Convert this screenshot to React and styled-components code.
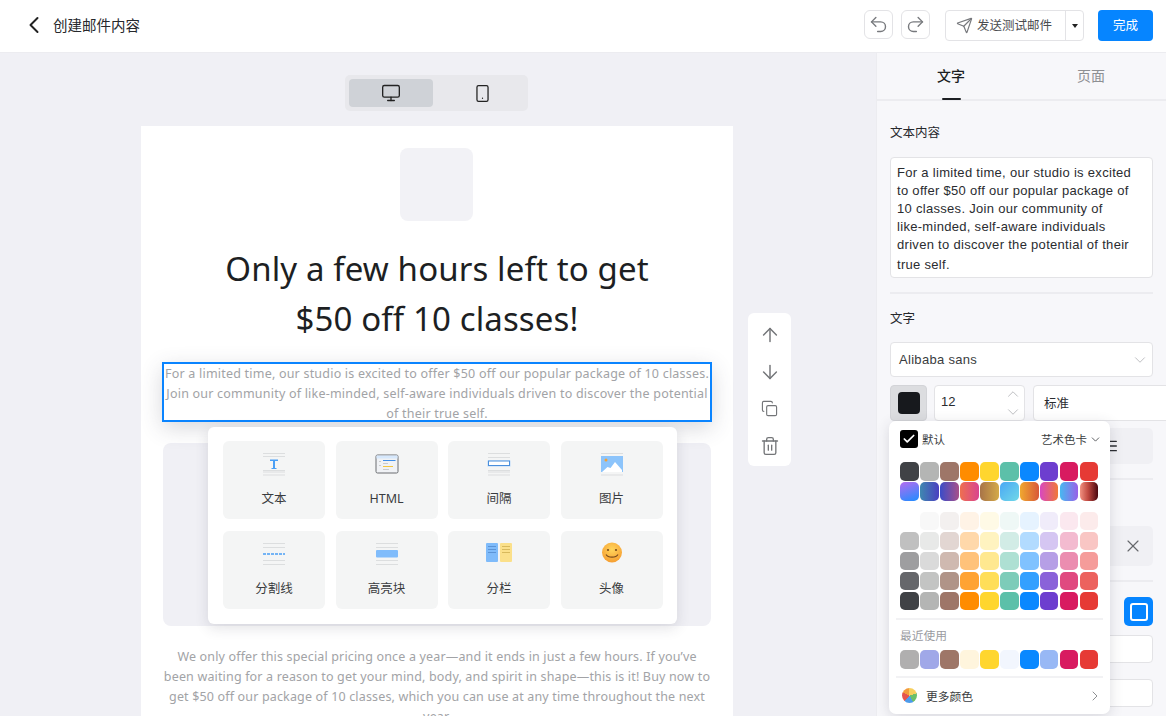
import React from "react";
import styled, { createGlobalStyle } from "styled-components";
import {
  ArrowDown,
  ArrowUp,
  Check,
  ChevronDown,
  ChevronLeft,
  ChevronRight,
  ChevronUp,
  Copy,
  Menu,
  Monitor,
  Redo2,
  Send,
  Smartphone,
  Trash2,
  Undo2,
  X,
} from "lucide-react";

const GlobalStyle = createGlobalStyle`
  html, body {
    margin: 0;
    padding: 0;
    height: 100%;
    overflow: hidden;
    font-family: "Noto Sans", "Noto Sans CJK SC", sans-serif;
    color: #1b1d21;
  }
  * { box-sizing: border-box; }
`;

const Page = styled.div`
  width: 1166px;
  height: 716px;
  overflow: hidden;
  display: flex;
  flex-direction: column;
  background: #fff;
`;

// top bar
const Header = styled.header`
  flex: none;
  height: 53px;
  padding: 10px 13px 0 20px;
  display: flex;
  align-items: flex-start;
  border-bottom: 1px solid #ececf0;
  background: #fff;
`;

const BackTitle = styled.div`
  display: flex;
  align-items: center;
  gap: 5px;
  height: 29px;
  font-size: 14.5px;
  color: #26282c;
  margin-right: auto;
`;

const IconButton = styled.button`
  width: 29px;
  height: 29px;
  padding: 0;
  margin-right: ${(p) => p.$mr || 0}px;
  display: flex;
  align-items: center;
  justify-content: center;
  background: #fff;
  border: 1px solid #e3e3e6;
  border-radius: 6px;
  color: #77797d;
`;

const SendGroup = styled.div`
  width: 139px;
  height: 31px;
  margin-right: 14px;
  display: flex;
  background: #fff;
  border: 1px solid #e3e3e6;
  border-radius: 4px;
`;

const SendMain = styled.div`
  flex: 1;
  display: flex;
  align-items: center;
  gap: 4px;
  padding-left: 10px;
  font-size: 12.5px;
  color: #4a4c50;
  border-right: 1px solid #e3e3e6;
`;

const SendLabel = styled.span`
  margin-top: -3px;
`;

const Caret = styled.div`
  width: 17px;
  display: flex;
  align-items: center;
  justify-content: center;
  &::after {
    content: "";
    border-top: 4px solid #222;
    border-left: 3.5px solid transparent;
    border-right: 3.5px solid transparent;
  }
`;

const DoneButton = styled.button`
  width: 55px;
  height: 31px;
  padding: 0 0 3px;
  background: #0685ff;
  border: none;
  border-radius: 4px;
  color: #fff;
  font: inherit;
  font-size: 12.5px;
`;

const Body = styled.div`
  flex: 1;
  min-height: 0;
  display: flex;
`;

// editing area
const Main = styled.main`
  width: 876px;
  padding: 22px 2px 0 0;
  display: flex;
  flex-direction: column;
  align-items: center;
  background: #f0f0f5;
`;

const DeviceToggle = styled.div`
  flex: none;
  width: 183px;
  height: 36px;
  margin-left: -1px;
  padding: 4px 0 4px 4px;
  display: flex;
  background: #e8e8ec;
  border-radius: 5px;
`;

const DeviceOption = styled.div`
  flex: none;
  width: ${(p) => (p.$active ? 84 : 95)}px;
  padding-left: ${(p) => (p.$active ? 0 : 3)}px;
  display: flex;
  align-items: center;
  justify-content: center;
  background: ${(p) => (p.$active ? "#cfd2d7" : "transparent")};
  border-radius: 4px;
  color: #222;
`;

const Canvas = styled.div`
  flex: none;
  position: relative;
  width: 592px;
  margin-top: 15px;
  padding: 22px 22px 0;
  display: flex;
  flex-direction: column;
  align-items: stretch;
  background: #fff;
`;

const LogoBox = styled.div`
  width: 73px;
  height: 73px;
  align-self: center;
  margin-left: -1px;
  background: #f2f2f6;
  border-radius: 8px;
`;

const Heading = styled.h1`
  margin: 23px 0 18px;
  font-size: 33px;
  font-weight: 400;
  line-height: 50px;
  letter-spacing: 0.12px;
  text-align: center;
  color: #1d1f23;
`;

const Selected = styled.div`
  position: relative;
  margin: 0 -1px;
  height: 60px;
  padding: 0;
  border: 2px solid #0a84ff;
  box-shadow: 0 6px 22px rgba(60, 60, 80, 0.2);
  font-size: 12.5px;
  line-height: 20px;
  letter-spacing: 0.21px;
  text-align: center;
  color: #a2a3a6;
  white-space: nowrap;
  background: #fff;
`;

const BlockPicker = styled.div`
  position: absolute;
  top: calc(100% + 7px);
  left: 44px;
  z-index: 3;
  width: 469px;
  height: 197px;
  padding: 14px 15px;
  display: grid;
  grid-template-columns: repeat(4, 102px);
  grid-auto-rows: 78px;
  column-gap: 10.5px;
  row-gap: 12px;
  background: #fff;
  border-radius: 6px;
  box-shadow: 0 4px 14px rgba(50, 50, 70, 0.14);
  letter-spacing: 0;
`;

const BlockCard = styled.div`
  padding-top: 11px;
  display: flex;
  flex-direction: column;
  align-items: center;
  background: #f4f5f5;
  border-radius: 6px;
  font-size: 12.5px;
  color: #3a3c40;
`;

const BlockLabel = styled.span`
  margin-top: 13px;
  line-height: 20px;
`;

const ImageHolder = styled.div`
  height: 183px;
  margin-top: 21px;
  background: #f0f0f5;
  border-radius: 8px;
`;

const Paragraph = styled.p`
  margin: 21px 0 0;
  font-size: 12.5px;
  line-height: 20px;
  letter-spacing: 0.16px;
  text-align: center;
  color: #a2a3a6;
  white-space: nowrap;
`;

const FloatTools = styled.div`
  position: absolute;
  left: 607px;
  top: 187px;
  width: 43px;
  height: 153px;
  padding-top: 3px;
  display: grid;
  grid-auto-rows: 37px;
  justify-items: center;
  align-items: center;
  background: #fff;
  border-radius: 6px;
  color: #737578;
`;

// right side panel
const Side = styled.aside`
  position: relative;
  width: 290px;
  overflow: hidden;
  background: #f7f7fa;
  border-left: 1px solid #ececf0;
`;

const Tabs = styled.div`
  height: 48px;
  padding: 0 5px 2px 4px;
  display: flex;
  border-bottom: 2px solid #ececf0;
`;

const Tab = styled.div`
  position: relative;
  flex: 1;
  display: flex;
  align-items: center;
  justify-content: center;
  font-size: 14px;
  font-weight: ${(p) => (p.$active ? 500 : 400)};
  color: ${(p) => (p.$active ? "#1d1f23" : "#8d8f93")};
  ${(p) =>
    p.$active &&
    `&::after {
      content: "";
      position: absolute;
      left: 61px;
      bottom: -3px;
      width: 19px;
      height: 2px;
      background: #1d1f23;
      border-radius: 1px;
    }`}
`;

const Section = styled.section`
  margin: 0 13px;
  padding: ${(p) => p.$pad || "15px 0"};
  border-bottom: ${(p) => (p.$last ? "none" : "2px solid #ececf0")};
`;

const Label = styled.div`
  font-size: 12.5px;
  line-height: 18px;
  color: #26282c;
`;

const TextBox = styled.div`
  margin-top: 15px;
  height: 121px;
  padding: 6px 6px;
  background: #fff;
  border: 1px solid #e3e3e6;
  border-radius: 4px;
  font-family: "Liberation Sans", "Noto Sans CJK SC", sans-serif;
  font-size: 13px;
  line-height: 18px;
  letter-spacing: 0.3px;
  color: #2a2c30;
  white-space: nowrap;
`;

const LastLine = styled.span`
  display: block;
  margin-top: 2px;
`;

const SelectBox = styled.div`
  margin-top: 14px;
  height: 35px;
  padding: 0 3px 0 8px;
  display: flex;
  align-items: center;
  justify-content: space-between;
  background: #fff;
  border: 1px solid #e3e3e6;
  border-radius: 4px;
  font-family: "Liberation Sans", "Noto Sans CJK SC", sans-serif;
  font-size: 13px;
  letter-spacing: 0.3px;
  color: #3a3c40;
`;

const FontRow = styled.div`
  margin-top: 8px;
  display: flex;
  gap: 8px;
`;

const ColorButton = styled.div`
  flex: none;
  width: 37px;
  height: 36px;
  margin-right: -1px;
  display: flex;
  align-items: center;
  justify-content: center;
  background: #dcdde0;
  border: 1px solid #d3d4d8;
  border-radius: 4px;
  &::after {
    content: "";
    width: 22px;
    height: 22px;
    border-radius: 4px;
    background: #17191d;
  }
`;

const NumberBox = styled.div`
  flex: none;
  position: relative;
  width: 91px;
  height: 36px;
  padding: 0 0 3px 6px;
  display: flex;
  align-items: center;
  background: #fff;
  border: 1px solid #e3e3e6;
  border-radius: 4px;
  font-family: "Liberation Sans", "Noto Sans CJK SC", sans-serif;
  font-size: 13px;
  color: #2a2c30;
`;

const Stepper = styled.div`
  position: absolute;
  right: 2px;
  top: -1px;
  bottom: -1px;
  display: flex;
  flex-direction: column;
  justify-content: space-between;
  color: #a8a9ad;
`;

const WeightBox = styled.div`
  flex: none;
  width: 150px;
  height: 36px;
  padding: 0 0 2px 10px;
  display: flex;
  align-items: center;
  background: #fff;
  border: 1px solid #e3e3e6;
  border-radius: 4px;
  font-size: 12.5px;
  color: #2a2c30;
`;

const AlignRow = styled.div`
  margin-top: 7px;
  height: 36px;
  padding-right: 34px;
  display: flex;
  align-items: center;
  justify-content: flex-end;
  background: #f0f0f4;
  border-radius: 5px;
  color: #2a2c30;
`;

const ClearRow = styled.div`
  margin-top: 46px;
  height: 40px;
  padding-right: 10px;
  display: flex;
  align-items: center;
  justify-content: flex-end;
  background: #f0f0f4;
  border-radius: 5px;
  color: #66686c;
`;

const ModeButton = styled.div`
  width: 29px;
  height: 29px;
  margin-left: auto;
  display: flex;
  align-items: center;
  justify-content: center;
  background: #0685ff;
  border-radius: 5px;
  &::after {
    content: "";
    width: 14px;
    height: 14px;
    border: 2px solid #fff;
    border-radius: 3px;
  }
`;

const PlainInput = styled.div`
  height: 28px;
  margin-top: ${(p) => p.$mt}px;
  background: #fff;
  border: 1px solid #e3e3e6;
  border-radius: 4px;
`;

// colour popover
const ColorPopover = styled.div`
  position: absolute;
  left: 12px;
  top: 368px;
  z-index: 4;
  width: 221px;
  height: 293px;
  padding: 0 7px;
  display: flex;
  flex-direction: column;
  background: #fff;
  border-radius: 7px;
  box-shadow: 0 3px 14px rgba(50, 50, 70, 0.16);
`;

const PopoverHead = styled.div`
  height: 36px;
  padding: 0 1px 0 4px;
  display: flex;
  align-items: center;
  justify-content: space-between;
  font-size: 11.5px;
  color: #3a3c40;
`;

const DefaultCheck = styled.div`
  display: flex;
  align-items: center;
  gap: 4px;
`;

const CheckMark = styled.span`
  width: 18px;
  height: 18px;
  display: flex;
  align-items: center;
  justify-content: center;
  background: #000;
  border-radius: 3px;
  color: #fff;
`;

const PaletteName = styled.div`
  display: flex;
  align-items: center;
  gap: 2px;
`;

const SwatchGrid = styled.div`
  margin: ${(p) => p.$mt || 0}px 0 0 4px;
  display: grid;
  grid-template-columns: repeat(10, 18.6px);
  grid-auto-rows: 18.6px;
  gap: 1.4px;
`;

const Swatch = styled.span`
  border-radius: 5px;
  background: ${(p) => p.$bg};
`;

const Rule = styled.div`
  height: 2px;
  margin-top: ${(p) => p.$mt}px;
  background: #f2f2f4;
`;

const RecentLabel = styled.div`
  margin: 7px 0 7px 4px;
  font-size: 11.75px;
  line-height: 16px;
  color: #9a9b9f;
`;

const MoreRow = styled.div`
  flex: 1;
  padding: 0 0 0 6px;
  display: flex;
  align-items: center;
  gap: 9px;
  font-size: 11.75px;
  color: #3a3c40;
`;

const MoreText = styled.span`
  margin-right: auto;
`;

const Wheel = styled.span`
  width: 15px;
  height: 15px;
  border-radius: 50%;
  background: conic-gradient(#f7cf5e 0 20%, #6cbf6a 20% 42%, #4d9bea 42% 62%, #e5544e 62% 82%, #f39a3c 82% 100%);
`;

const Bars = ({ rows, w = 22, y = 0 }) =>
  rows.map((r, i) => <rect key={i} x={(24 - w) / 2} y={r + y} width={w} height="1" fill="#dcdedf" />);

const TextIcon = () => (
  <svg width="24" height="24" viewBox="0 0 24 24">
    <Bars rows={[1, 4, 18, 19.5, 22.5]} />
    <rect x="1" y="5" width="22" height="12.5" fill="#f4f5f5" />
    <path d="M8 7.5h8v1.6h-3v7h1.5v1h-5v-1H11v-7H8z" fill="#4a9ff5" />
  </svg>
);

const HtmlIcon = () => (
  <svg width="24" height="24" viewBox="0 0 24 24">
    <rect x="1" y="3" width="22" height="18" rx="1.5" fill="#f0f2f5" stroke="#6a6c70" />
    <rect x="1.5" y="3.5" width="21" height="3" fill="#d6e8fc" />
    <rect x="8" y="8" width="12.5" height="1" fill="#3d8de8" />
    <rect x="8" y="11" width="5" height="1" fill="#c8cacc" />
    <rect x="8" y="14" width="10" height="1" fill="#f4c63f" />
    <rect x="8" y="17" width="6" height="1" fill="#c8cacc" />
    <rect x="4" y="9" width="2" height="1" fill="#c8cacc" />
    <rect x="4" y="13" width="2" height="1" fill="#c8cacc" />
  </svg>
);

const SpacerIcon = () => (
  <svg width="24" height="24" viewBox="0 0 24 24">
    <Bars rows={[1, 5, 18, 19.5, 22.5]} />
    <rect x="0.5" y="8.5" width="23" height="6" fill="#b9dafc" />
    <rect x="1.5" y="9" width="21" height="4.5" fill="#fff" stroke="#4a8fdc" />
  </svg>
);

const ImageIcon = () => (
  <svg width="24" height="24" viewBox="0 0 24 24">
    <rect x="1" y="1" width="22" height="1" fill="#dcdedf" />
    <rect x="1" y="22.5" width="22" height="1" fill="#dcdedf" />
    <rect x="1" y="4" width="22" height="16" fill="#8cc4fb" />
    <circle cx="6" cy="8" r="1.5" fill="#f3a034" />
    <path d="M2 20l5.5-5 3 1 4.5-6 7 8v2z" fill="#fff" />
  </svg>
);

const DividerIcon = () => (
  <svg width="24" height="24" viewBox="0 0 24 24">
    <Bars rows={[1, 5, 18, 22]} />
    <path d="M1 12h22" stroke="#4a9ff5" strokeWidth="1.4" strokeDasharray="3 1" />
  </svg>
);

const HighlightIcon = () => (
  <svg width="24" height="24" viewBox="0 0 24 24">
    <Bars rows={[1, 5, 18, 22]} />
    <rect x="1" y="8" width="22" height="7.5" rx="1" fill="#80bcfb" />
  </svg>
);

const ColumnsIcon = () => (
  <svg width="28" height="24" viewBox="0 0 28 24">
    <rect x="1" y="1" width="12" height="19" rx="1" fill="#7fbbfa" />
    <rect x="15" y="1" width="12" height="19" rx="1" fill="#fbe08a" />
    {[4, 7, 10].map((y) => (
      <React.Fragment key={y}>
        <rect x="3" y={y} width="8" height="1" fill="#5c94d6" />
        <rect x="17" y={y} width="8" height="1" fill="#d8b95c" />
      </React.Fragment>
    ))}
  </svg>
);

const AvatarIcon = () => (
  <svg width="24" height="24" viewBox="0 0 24 24">
    <defs>
      <radialGradient id="faceFill" cx="50%" cy="35%" r="70%">
        <stop offset="0%" stopColor="#ffd55c" />
        <stop offset="100%" stopColor="#f59a2e" />
      </radialGradient>
    </defs>
    <circle cx="12" cy="10.5" r="10" fill="url(#faceFill)" />
    <circle cx="8" cy="8" r="1.1" fill="#7a4a1c" />
    <circle cx="16" cy="8" r="1.1" fill="#7a4a1c" />
    <path d="M6 12.5c2 3.5 10 3.5 12 0" fill="none" stroke="#7a4a1c" strokeWidth="1.1" />
  </svg>
);

const blocks = [
  { label: "文本", Icon: TextIcon },
  { label: "HTML", Icon: HtmlIcon },
  { label: "间隔", Icon: SpacerIcon },
  { label: "图片", Icon: ImageIcon },
  { label: "分割线", Icon: DividerIcon },
  { label: "高亮块", Icon: HighlightIcon },
  { label: "分栏", Icon: ColumnsIcon },
  { label: "头像", Icon: AvatarIcon },
];

const artColors = ["#404246", "#b4b5b4", "#9e7668", "#ff8c00", "#ffd62e", "#5cc0a9", "#0a88ff", "#6d3ecf", "#d81b60", "#e63a35"];
const gradients = [
  "linear-gradient(160deg,#b56cf0,#1f8dff)",
  "linear-gradient(90deg,#3f88b0,#4a3fc0)",
  "linear-gradient(90deg,#3b4cc8,#a8508a)",
  "linear-gradient(90deg,#ee6f50,#d9448f)",
  "linear-gradient(90deg,#a87448,#d4aa48)",
  "linear-gradient(135deg,#4aa8f5,#70d8e8)",
  "linear-gradient(90deg,#f0a830,#d85838)",
  "linear-gradient(90deg,#d848c0,#f07838)",
  "linear-gradient(90deg,#48b8f0,#9860e8)",
  "linear-gradient(90deg,#f09080,#c04840 45%,#4a0810)",
];
const tints = [
  ["#ffffff", "#f8f8f8", "#f3f0ef", "#fff3e6", "#fffae6", "#eff8f6", "#e6f3ff", "#f0ecfa", "#fbe8ef", "#fcebeb"],
  ["#c0c0c0", "#e8e9e8", "#e2d6d2", "#ffd8aa", "#fff3c0", "#d2ece6", "#b2dbff", "#d5c6f2", "#f3bbd0", "#f9c6c4"],
  ["#9e9ea0", "#dadada", "#cfb9b0", "#ffc27a", "#ffe890", "#aee0d3", "#80c2ff", "#b69fe6", "#eb8db0", "#f59c9a"],
  ["#66676b", "#c3c4c3", "#b09488", "#ffa333", "#ffde58", "#7dccb9", "#33a0ff", "#8a62d9", "#e04a80", "#ec625e"],
  artColors,
];
const recent = ["#b0afaf", "#a0a8e8", "#9e7668", "#fff5dd", "#ffd62e", "#f2f6fe", "#0a88ff", "#98b8f5", "#d81b60", "#e63a35"];

export default function App() {
  return (
    <>
      <GlobalStyle />
      <Page>
        <Header>
          <BackTitle>
            <ChevronLeft size={28} strokeWidth={1.7} color="#222" />
            创建邮件内容
          </BackTitle>
          <IconButton $mr={8}>
            <Undo2 size={21} strokeWidth={1.6} />
          </IconButton>
          <IconButton $mr={15}>
            <Redo2 size={21} strokeWidth={1.6} />
          </IconButton>
          <SendGroup>
            <SendMain>
              <Send size={17} strokeWidth={1.7} color="#77797d" />
              <SendLabel>发送测试邮件</SendLabel>
            </SendMain>
            <Caret />
          </SendGroup>
          <DoneButton>完成</DoneButton>
        </Header>
        <Body>
          <Main>
            <DeviceToggle>
              <DeviceOption $active>
                <Monitor size={20} strokeWidth={1.6} />
              </DeviceOption>
              <DeviceOption>
                <Smartphone size={19} strokeWidth={1.6} />
              </DeviceOption>
            </DeviceToggle>
            <Canvas>
              <LogoBox />
              <Heading>
                Only a few hours left to get
                <br />
                $50 off 10 classes!
              </Heading>
              <Selected>
                For a limited time, our studio is excited to offer $50 off our popular package of 10 classes.
                <br />
                Join our community of like-minded, self-aware individuals driven to discover the potential
                <br />
                of their true self.
                <BlockPicker>
                  {blocks.map(({ label, Icon }) => (
                    <BlockCard key={label}>
                      <Icon />
                      <BlockLabel>{label}</BlockLabel>
                    </BlockCard>
                  ))}
                </BlockPicker>
              </Selected>
              <ImageHolder />
              <Paragraph>
                We only offer this special pricing once a year—and it ends in just a few hours. If you’ve
                <br />
                been waiting for a reason to get your mind, body, and spirit in shape—this is it! Buy now to
                <br />
                get $50 off our package of 10 classes, which you can use at any time throughout the next
                <br />
                year.
              </Paragraph>
              <FloatTools>
                <ArrowUp size={22} strokeWidth={1.6} />
                <ArrowDown size={22} strokeWidth={1.6} />
                <Copy size={17} strokeWidth={1.6} />
                <Trash2 size={20} strokeWidth={1.6} />
              </FloatTools>
            </Canvas>
          </Main>
          <Side>
            <Tabs>
              <Tab $active>文字</Tab>
              <Tab>页面</Tab>
            </Tabs>
            <Section $pad="23px 0 14px">
              <Label>文本内容</Label>
              <TextBox>
                For a limited time, our studio is excited
                <br />
                to offer $50 off our popular package of
                <br />
                10 classes. Join our community of
                <br />
                like-minded, self-aware individuals
                <br />
                driven to discover the potential of their
                <LastLine>true self.</LastLine>
              </TextBox>
            </Section>
            <Section $pad="16px 0 14px">
              <Label>文字</Label>
              <SelectBox>
                Alibaba sans
                <ChevronDown size={18} strokeWidth={1} color="#a8a9ad" />
              </SelectBox>
              <FontRow>
                <ColorButton />
                <NumberBox>
                  12
                  <Stepper>
                    <ChevronUp size={18} strokeWidth={1} />
                    <ChevronDown size={18} strokeWidth={1} />
                  </Stepper>
                </NumberBox>
                <WeightBox>标准</WeightBox>
              </FontRow>
              <AlignRow>
                <Menu size={16} strokeWidth={2} />
              </AlignRow>
            </Section>
            <Section $pad="0 0 14px">
              <ClearRow>
                <X size={20} strokeWidth={1.4} />
              </ClearRow>
            </Section>
            <Section $pad="15px 0 0" $last>
              <ModeButton />
              <PlainInput $mt={9} />
              <PlainInput $mt={16} />
            </Section>
            <ColorPopover>
              <PopoverHead>
                <DefaultCheck>
                  <CheckMark>
                    <Check size={14} strokeWidth={3} />
                  </CheckMark>
                  默认
                </DefaultCheck>
                <PaletteName>
                  艺术色卡
                  <ChevronDown size={13} strokeWidth={1.5} />
                </PaletteName>
              </PopoverHead>
              <SwatchGrid $mt={5}>
                {artColors.map((c) => (
                  <Swatch key={c} $bg={c} />
                ))}
                {gradients.map((c) => (
                  <Swatch key={c} $bg={c} />
                ))}
              </SwatchGrid>
              <SwatchGrid $mt={11}>
                {tints.flat().map((c, i) => (
                  <Swatch key={i} $bg={c} />
                ))}
              </SwatchGrid>
              <Rule $mt={8} />
              <RecentLabel>最近使用</RecentLabel>
              <SwatchGrid>
                {recent.map((c) => (
                  <Swatch key={c} $bg={c} />
                ))}
              </SwatchGrid>
              <Rule $mt={7} />
              <MoreRow>
                <Wheel />
                <MoreText>更多颜色</MoreText>
                <ChevronRight size={16} strokeWidth={1.25} color="#77797d" />
              </MoreRow>
            </ColorPopover>
          </Side>
        </Body>
      </Page>
    </>
  );
}
